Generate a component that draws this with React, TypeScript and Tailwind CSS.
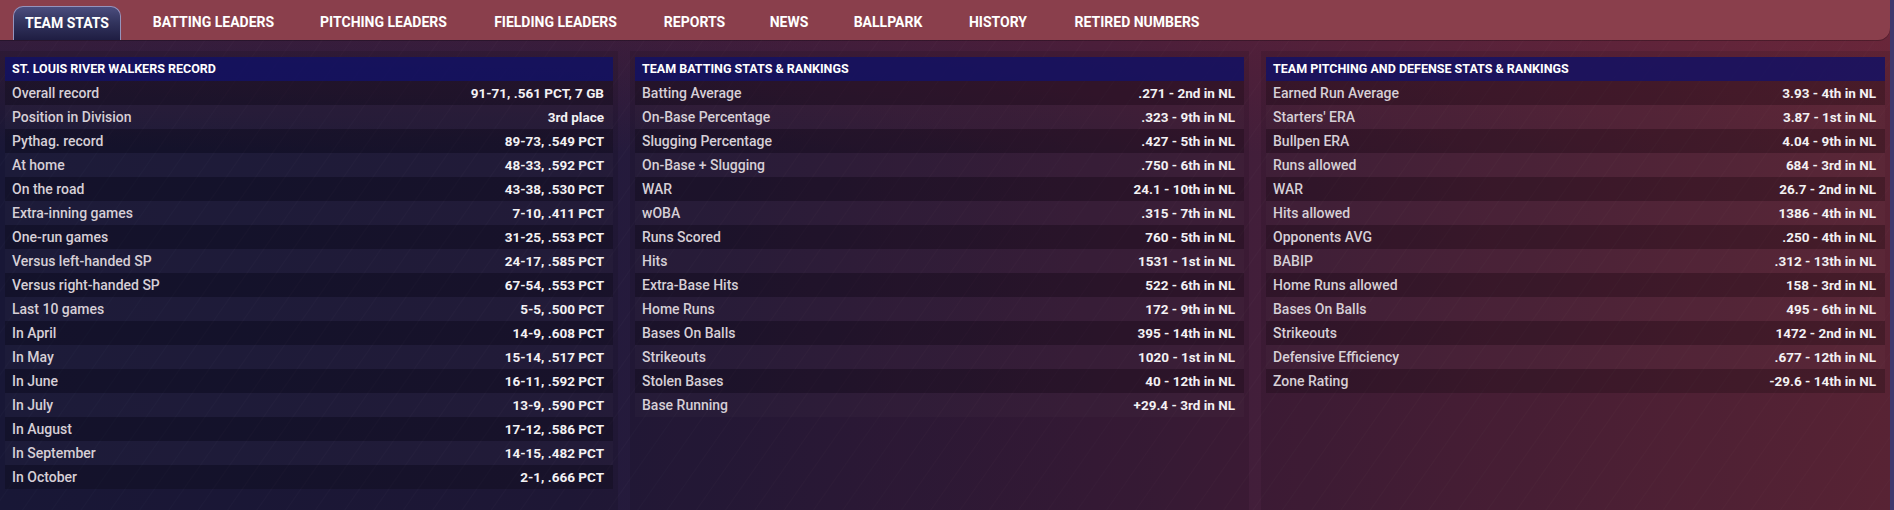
import React from "react";

type Row = [string, string];

const tabs: { label: string; w: string; active?: boolean }[] = [
  { label: "TEAM STATS", w: "w-[108px]", active: true },
  { label: "BATTING LEADERS", w: "w-[149px]" },
  { label: "PITCHING LEADERS", w: "w-[155px]" },
  { label: "FIELDING LEADERS", w: "w-[153px]" },
  { label: "REPORTS", w: "w-[89px]" },
  { label: "NEWS", w: "w-[64px]" },
  { label: "BALLPARK", w: "w-[98px]" },
  { label: "HISTORY", w: "w-[86px]" },
  { label: "RETIRED NUMBERS", w: "w-[156px]" },
];

const record: Row[] = [
  ["Overall record", "91-71, .561 PCT, 7 GB"],
  ["Position in Division", "3rd place"],
  ["Pythag. record", "89-73, .549 PCT"],
  ["At home", "48-33, .592 PCT"],
  ["On the road", "43-38, .530 PCT"],
  ["Extra-inning games", "7-10, .411 PCT"],
  ["One-run games", "31-25, .553 PCT"],
  ["Versus left-handed SP", "24-17, .585 PCT"],
  ["Versus right-handed SP", "67-54, .553 PCT"],
  ["Last 10 games", "5-5, .500 PCT"],
  ["In April", "14-9, .608 PCT"],
  ["In May", "15-14, .517 PCT"],
  ["In June", "16-11, .592 PCT"],
  ["In July", "13-9, .590 PCT"],
  ["In August", "17-12, .586 PCT"],
  ["In September", "14-15, .482 PCT"],
  ["In October", "2-1, .666 PCT"],
];

const batting: Row[] = [
  ["Batting Average", ".271 - 2nd in NL"],
  ["On-Base Percentage", ".323 - 9th in NL"],
  ["Slugging Percentage", ".427 - 5th in NL"],
  ["On-Base + Slugging", ".750 - 6th in NL"],
  ["WAR", "24.1 - 10th in NL"],
  ["wOBA", ".315 - 7th in NL"],
  ["Runs Scored", "760 - 5th in NL"],
  ["Hits", "1531 - 1st in NL"],
  ["Extra-Base Hits", "522 - 6th in NL"],
  ["Home Runs", "172 - 9th in NL"],
  ["Bases On Balls", "395 - 14th in NL"],
  ["Strikeouts", "1020 - 1st in NL"],
  ["Stolen Bases", "40 - 12th in NL"],
  ["Base Running", "+29.4 - 3rd in NL"],
];

const pitching: Row[] = [
  ["Earned Run Average", "3.93 - 4th in NL"],
  ["Starters' ERA", "3.87 - 1st in NL"],
  ["Bullpen ERA", "4.04 - 9th in NL"],
  ["Runs allowed", "684 - 3rd in NL"],
  ["WAR", "26.7 - 2nd in NL"],
  ["Hits allowed", "1386 - 4th in NL"],
  ["Opponents AVG", ".250 - 4th in NL"],
  ["BABIP", ".312 - 13th in NL"],
  ["Home Runs allowed", "158 - 3rd in NL"],
  ["Bases On Balls", "495 - 6th in NL"],
  ["Strikeouts", "1472 - 2nd in NL"],
  ["Defensive Efficiency", ".677 - 12th in NL"],
  ["Zone Rating", "-29.6 - 14th in NL"],
];

function Panel({ title, rows, w }: { title: string; rows: Row[]; w: string }) {
  return (
    <section className={`${w} h-full bg-black/10 pt-[6px] px-[5px]`}>
      <div className="h-[24px] flex items-center px-[7px] bg-[#101066]/80 text-white text-[12.5px] font-bold uppercase">
        {title}
      </div>
      {rows.map(([k, v], i) => (
        <div
          key={k + i}
          className={`h-[24px] flex items-center justify-between pl-[7px] pr-[9px] ${
            i % 2 === 0 ? "bg-black/20" : "bg-white/[0.02]"
          }`}
        >
          <span className="text-[14px] font-medium text-[#d6cfd6]">{k}</span>
          <span className="text-[13.5px] font-bold text-[#f3f1f3]">{v}</span>
        </div>
      ))}
    </section>
  );
}

export default function App() {
  return (
    <div className="w-[1894px] h-[510px] overflow-hidden border-r-[4px] border-[#3e3a6e] font-['Roboto','Liberation_Sans',Arial,sans-serif] bg-[linear-gradient(180deg,rgba(125,36,58,0.35)_0%,rgba(125,36,58,0)_30%),repeating-linear-gradient(125deg,rgba(255,255,255,0)_0px,rgba(255,255,255,0)_22px,rgba(255,255,255,0.018)_23px,rgba(255,255,255,0)_24px),linear-gradient(90deg,#1b1a3d_0%,#221a3c_30%,#3a1c3a_58%,#62273a_100%)]">
      <nav className="h-[40px] w-full bg-[#8a3f4c] rounded-br-[12px] flex items-end gap-[18px] pl-[13px] shadow-[0_1px_0_rgba(0,0,0,0.25)]">
        {tabs.map((t) => (
          <div
            key={t.label}
            className={`${t.w} h-[34px] flex items-center justify-center pb-[1px] text-[14px] font-bold text-white whitespace-nowrap ${
              t.active
                ? "rounded-t-[10px] border border-b-0 border-[#9594bd] bg-[linear-gradient(180deg,#4b4d7e_0%,#33355f_45%,#1f1d42_100%)]"
                : ""
            }`}
          >
            {t.label}
          </div>
        ))}
      </nav>
      <main className="flex gap-[12px] mt-[11px] h-[459px]">
        <Panel title="St. Louis River Walkers Record" rows={record} w="w-[618px]" />
        <Panel title="Team Batting Stats & Rankings" rows={batting} w="w-[619px]" />
        <Panel title="Team Pitching and Defense Stats & Rankings" rows={pitching} w="w-[629px]" />
      </main>
    </div>
  );
}
